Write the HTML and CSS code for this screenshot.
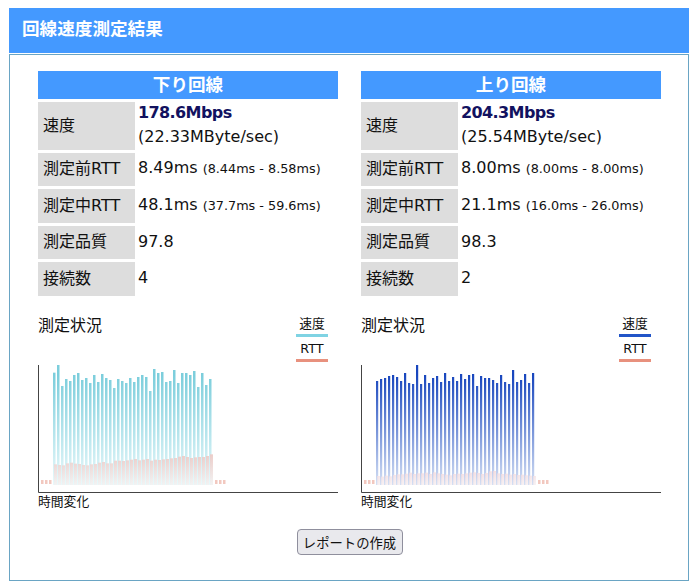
FILE: index.html
```html
<!DOCTYPE html>
<html lang="ja">
<head>
    <meta charset="UTF-8">
    <meta name="viewport" content="width=device-width, initial-scale=1.0">
    <title>回線速度測定結果</title>
    <link rel="stylesheet" href="styles.css">
</head>
<body>
    <div class="page">
        <h1 class="page-title">回線速度測定結果</h1>

        <div class="result-box">
            <div class="columns">
                <section class="column">
                    <h2 class="column-title">下り回線</h2>
                    <div class="stats">
                        <div class="stat-label">速度</div>
                        <div class="stat-value"><div><strong>178.6Mbps</strong><br>(22.33MByte/sec)</div></div>
                        <div class="stat-label">測定前RTT</div>
                        <div class="stat-value"><div>8.49ms <small>(8.44ms - 8.58ms)</small></div></div>
                        <div class="stat-label">測定中RTT</div>
                        <div class="stat-value"><div>48.1ms <small>(37.7ms - 59.6ms)</small></div></div>
                        <div class="stat-label">測定品質</div>
                        <div class="stat-value"><div>97.8</div></div>
                        <div class="stat-label">接続数</div>
                        <div class="stat-value"><div>4</div></div>
                    </div>
                    <div class="chart-head">
                        <div class="chart-title">測定状況</div>
                        <div class="legend">
                            <div class="legend-item legend-down">速度</div>
                            <div class="legend-item legend-rtt">RTT</div>
                        </div>
                    </div>
                    <svg class="chart" id="chartDown" width="300" height="128" viewBox="0 0 300 128"></svg>
                    <div class="chart-caption">時間変化</div>
                </section>

                <section class="column">
                    <h2 class="column-title">上り回線</h2>
                    <div class="stats">
                        <div class="stat-label">速度</div>
                        <div class="stat-value"><div><strong>204.3Mbps</strong><br>(25.54MByte/sec)</div></div>
                        <div class="stat-label">測定前RTT</div>
                        <div class="stat-value"><div>8.00ms <small>(8.00ms - 8.00ms)</small></div></div>
                        <div class="stat-label">測定中RTT</div>
                        <div class="stat-value"><div>21.1ms <small>(16.0ms - 26.0ms)</small></div></div>
                        <div class="stat-label">測定品質</div>
                        <div class="stat-value"><div>98.3</div></div>
                        <div class="stat-label">接続数</div>
                        <div class="stat-value"><div>2</div></div>
                    </div>
                    <div class="chart-head">
                        <div class="chart-title">測定状況</div>
                        <div class="legend">
                            <div class="legend-item legend-up">速度</div>
                            <div class="legend-item legend-rtt">RTT</div>
                        </div>
                    </div>
                    <svg class="chart" id="chartUp" width="300" height="128" viewBox="0 0 300 128"></svg>
                    <div class="chart-caption">時間変化</div>
                </section>
            </div>

            <div class="actions">
                <button class="report-btn">レポートの作成</button>
            </div>
        </div>
    </div>

    <script src="chart.js"></script>
</body>
</html>
```

FILE: styles.css
```css
* {
    margin: 0;
    padding: 0;
    box-sizing: border-box;
}

body {
    font-family: "DejaVu Sans", "Noto Sans CJK JP", sans-serif;
    font-size: 16px;
    color: #111;
    background: white;
    padding: 8px 0 0 9px;
}

.page {
    width: 680px;
}

.page-title {
    height: 45px;
    line-height: 43px;
    padding-left: 13px;
    font-size: 17.6px;
    font-weight: bold;
    color: white;
    background: #4499ff;
}

.result-box {
    height: 527px;
    margin-top: 1px;
    padding: 16px 27px 0 28px;
    border: 1px solid #6aa5c4;
}

.columns {
    display: grid;
    grid-template-columns: 300px 300px;
    gap: 23px;
}

.column-title {
    height: 28px;
    line-height: 28px;
    text-align: center;
    font-size: 17.6px;
    font-weight: bold;
    color: white;
    background: #4499ff;
}

.stats {
    display: grid;
    grid-template-columns: 97px 1fr;
    grid-template-rows: 48px 33px 34px 33px 34px;
    gap: 3px;
    margin-top: 3px;
}

.stat-label {
    display: flex;
    align-items: center;
    padding: 0 0 5px 5px;
    background: #dddddd;
}

.stat-value {
    display: flex;
    align-items: center;
    padding-bottom: 2px;
    line-height: 24px;
}

.stat-value strong {
    letter-spacing: -0.6px;
    color: #12125f;
}

.stat-value small {
    font-size: 12.8px;
}

.chart-head {
    display: flex;
    justify-content: space-between;
    margin-top: 20px;
    height: 49px;
}

.chart-title {
    line-height: 20px;
}

.legend {
    display: flex;
    flex-direction: column;
    gap: 3px;
    margin-top: -1px;
    width: 32px;
    margin-right: 10px;
}

.legend-item {
    height: 22px;
    line-height: 18px;
    font-size: 12.8px;
    text-align: center;
    border-bottom: 3px solid;
}

.legend-down { border-color: #7fd3e3; }
.legend-up { border-color: #2255c8; }
.legend-rtt { border-color: #e8917e; }

.chart {
    display: block;
}

.chart-caption {
    font-size: 12.8px;
    line-height: 18px;
}

.actions {
    margin-top: 18px;
    text-align: center;
}

.report-btn {
    width: 106px;
    height: 26px;
    font-family: inherit;
    font-size: 13.33px;
    color: #111;
    background: #e9e9ed;
    border: 1px solid #8f8f9d;
    border-radius: 4px;
}
```

FILE: chart.js
```js
var NS = "http://www.w3.org/2000/svg";

// tops are page y values read off the graph, the baseline is y=485
var charts = [
    {
        id: "chartDown",
        barColor: "#7ccedc",
        barFade: "#e9f9fb",
        barWidth: 2.5,
        rttColor: "#ecc9c5",
        rttFade: "#f2f2f2",
        rttOpacity: 0.9,
        speed: [188,165,228,207,213,195,189,210,204,219,195,216,192,204,210,234,207,213,219,204,
                216,201,195,201,243,177,189,186,216,213,180,219,189,189,195,183,231,189,225,207],
        rtt: [463,465,466,460,458,461,462,465,466,463,462,458,456,460,460,452,452,453,451,449,
              447,451,449,447,452,449,450,448,447,445,444,440,438,441,444,442,441,441,438,433]
    },
    {
        id: "chartUp",
        barColor: "#1846be",
        barFade: "#d5e0f4",
        barWidth: 2.2,
        rttColor: "#f0bcc0",
        rttFade: "#f6eef0",
        rttOpacity: 0.75,
        speed: [213,207,204,198,195,201,213,189,219,222,165,222,195,219,204,198,216,189,213,201,
                213,192,207,195,192,228,198,204,204,210,219,195,216,222,180,216,210,192,219,189],
        rtt: [498,500,497,499,495,493,493,491,488,492,490,490,488,492,487,490,492,494,496,492,
              491,492,490,488,487,489,492,489,484,483,490,492,491,494,492,495,494,496,497,498]
    }
];

function el(name, attrs, parent) {
    var node = document.createElementNS(NS, name);
    for (var key in attrs) {
        node.setAttribute(key, attrs[key]);
    }
    parent.appendChild(node);
    return node;
}

function addGradient(defs, id, from, to, y1, y2) {
    var grad = el("linearGradient", { id: id, gradientUnits: "userSpaceOnUse", x1: 0, x2: 0, y1: y1, y2: y2 }, defs);
    el("stop", { offset: 0, "stop-color": from }, grad);
    el("stop", { offset: 1, "stop-color": to }, grad);
}

charts.forEach(function (c) {
    var svg = document.getElementById(c.id);
    var defs = el("defs", {}, svg);
    var base = 120;

    addGradient(defs, c.id + "Bar", c.barColor, c.barFade, 10, base);
    addGradient(defs, c.id + "Rtt", c.rttColor, c.rttFade, 90, base);

    c.speed.forEach(function (z, i) {
        var top = z / 3 + 310 - 365;
        el("rect", { x: 15 + i * 4, y: top, width: c.barWidth, height: base - top, fill: "url(#" + c.id + "Bar)" }, svg);
    });

    c.rtt.forEach(function (z, i) {
        var top = z / 3 + 310 - 365;
        el("rect", { x: 16 + i * 4, y: top, width: 3, height: base - top, fill: "url(#" + c.id + "Rtt)", "fill-opacity": c.rttOpacity }, svg);
    });

    // short rtt ticks before and after the measurement
    [3, 7, 11, 177, 181, 185].forEach(function (x) {
        el("rect", { x: x, y: 115, width: 2.5, height: 4, fill: "#f2c8bf" }, svg);
    });

    el("path", { d: "M0.5 0V127.5H300", fill: "none", stroke: "#444", "stroke-width": 1 }, svg);
});
```
